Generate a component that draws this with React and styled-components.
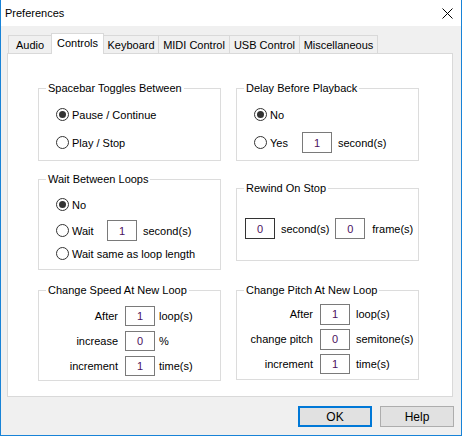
import React from 'react'
import styled, { createGlobalStyle } from 'styled-components'

const Global = createGlobalStyle`
  html, body { margin: 0; padding: 0; background: #fff; }
  * { box-sizing: border-box; }
`

const Window = styled.div`
  width: 462px;
  height: 436px;
  background: #f0f0f0;
  border: 1px solid #1883d7;
  border-top: none;
  font-family: 'Liberation Sans', Arial, sans-serif;
  font-size: 11px;
  color: #000;
  display: flex;
  flex-direction: column;
`

const TitleBar = styled.div`
  height: 26px;
  background: #fff;
  display: flex;
  align-items: center;
  justify-content: space-between;
  padding: 0 8px 0 4px;
  font-size: 11px;
`

const Body = styled.div`
  flex: 1;
  padding: 7px 7px 0 6px;
  display: flex;
  flex-direction: column;
`

const TabStrip = styled.div`
  height: 20px;
  display: flex;
  align-items: flex-end;
  padding-left: 2px;
`

const Tab = styled.div`
  width: ${p => p.$w}px;
  height: ${p => (p.$active ? 21 : 18)}px;
  margin-bottom: ${p => (p.$active ? -1 : 0)}px;
  margin-left: -1px;
  border: 1px solid #d9d9d9;
  border-bottom: none;
  background: ${p => (p.$active ? '#fff' : '#f0f0f0')};
  display: flex;
  align-items: ${p => (p.$active ? 'flex-start' : 'center')};
  padding-top: ${p => (p.$active ? 3 : 1)}px;
  justify-content: center;
  position: relative;
  z-index: ${p => (p.$active ? 1 : 0)};
`

const Panel = styled.div`
  width: 446px;
  height: 344px;
  background: #fff;
  border: 1px solid #d9d9d9;
  padding: 34px 0 0 30px;
  display: flex;
  gap: 15px;
`

const Column = styled.div`
  width: 183px;
  display: flex;
  flex-direction: column;
`

const Group = styled.div`
  position: relative;
  height: ${p => p.$h}px;
  margin-top: ${p => p.$mt || 0}px;
  border: 1px solid #dcdcdc;
  padding: ${p => p.$pad || '0'};
  display: flex;
  flex-direction: column;
`

const Legend = styled.span`
  position: absolute;
  left: 7px;
  top: -7px;
  background: #fff;
  padding: 0 2px;
  line-height: 13px;
`

const Row = styled.div`
  display: flex;
  align-items: center;
  height: 21px;
  margin-top: ${p => p.$mt || 0}px;
`

const RadioLabel = styled.div`
  display: flex;
  align-items: center;
  width: ${p => (p.$w ? `${p.$w}px` : 'auto')};
  gap: 3px;
`

const Circle = styled.span`
  width: 13px;
  height: 13px;
  border-radius: 50%;
  border: 1px solid #333;
  background: #fff;
  display: flex;
  align-items: center;
  justify-content: center;
  &::after {
    content: '';
    display: ${p => (p.$on ? 'block' : 'none')};
    width: 7px;
    height: 7px;
    border-radius: 50%;
    background: #333;
  }
`

const Input = styled.div`
  width: 30px;
  height: ${p => p.$h || 21}px;
  border: 1px solid ${p => (p.$dark ? '#333' : '#7a7a7a')};
  display: flex;
  align-items: center;
  justify-content: center;
  color: #4b0f5e;
  flex-shrink: 0;
`

const Unit = styled.span`
  margin-left: ${p => p.$ml || 6}px;
`

const FormGrid = styled.div`
  display: grid;
  grid-template-columns: ${p => p.$label}px 30px auto;
  grid-auto-rows: 20px;
  row-gap: ${p => p.$gap}px;
  align-items: center;
`

const FieldLabel = styled.span`
  text-align: right;
  padding-right: 7px;
`

const Footer = styled.div`
  display: flex;
  justify-content: flex-end;
  gap: 8px;
  padding: 9px 0 0;
`

const Button = styled.div`
  width: 74px;
  height: 21px;
  background: #e1e1e1;
  border: ${p => (p.$primary ? '2px solid #0078d7' : '1px solid #adadad')};
  display: flex;
  align-items: center;
  justify-content: center;
  font-size: 12px;
`

const Radio = ({ on, children, w }) => (
  <RadioLabel $w={w}>
    <Circle $on={on} />
    <span>{children}</span>
  </RadioLabel>
)

const Close = () => (
  <svg width="11" height="11" viewBox="0 0 11 11">
    <path d="M0.5 0.5 L10.5 10.5 M10.5 0.5 L0.5 10.5" stroke="#000" strokeWidth="1" />
  </svg>
)

const tabs = [
  ['Audio', 44],
  ['Controls', 53],
  ['Keyboard', 56],
  ['MIDI Control', 72],
  ['USB Control', 71],
  ['Miscellaneous', 79],
]

export default function App() {
  return (
    <>
      <Global />
      <Window>
        <TitleBar>
          <span>Preferences</span>
          <Close />
        </TitleBar>
        <Body>
          <TabStrip>
            {tabs.map(([t, w]) => (
              <Tab key={t} $w={w} $active={t === 'Controls'}>
                {t}
              </Tab>
            ))}
          </TabStrip>
          <Panel>
            <Column>
              <Group $h={73} $pad="15px 0 0 17px">
                <Legend>Spacebar Toggles Between</Legend>
                <Row><Radio on>Pause / Continue</Radio></Row>
                <Row $mt={7}><Radio>Play / Stop</Radio></Row>
              </Group>
              <Group $h={91} $mt={18} $pad="14px 0 0 17px">
                <Legend>Wait Between Loops</Legend>
                <Row><Radio on>No</Radio></Row>
                <Row $mt={5}>
                  <Radio w={51}>Wait</Radio>
                  <Input>1</Input>
                  <Unit>second(s)</Unit>
                </Row>
                <Row $mt={2}><Radio>Wait same as loop length</Radio></Row>
              </Group>
              <Group $h={91} $mt={20} $pad="15px 0 0 0">
                <Legend>Change Speed At New Loop</Legend>
                <FormGrid $label={86} $gap={5}>
                  <FieldLabel>After</FieldLabel>
                  <Input $h={20}>1</Input>
                  <Unit $ml={4}>loop(s)</Unit>
                  <FieldLabel>increase</FieldLabel>
                  <Input $h={20}>0</Input>
                  <Unit $ml={4}>%</Unit>
                  <FieldLabel>increment</FieldLabel>
                  <Input $h={20}>1</Input>
                  <Unit $ml={4}>time(s)</Unit>
                </FormGrid>
              </Group>
            </Column>
            <Column>
              <Group $h={73} $pad="15px 0 0 17px">
                <Legend>Delay Before Playback</Legend>
                <Row><Radio on>No</Radio></Row>
                <Row $mt={7}>
                  <Radio w={48}>Yes</Radio>
                  <Input>1</Input>
                  <Unit>second(s)</Unit>
                </Row>
              </Group>
              <Group $h={73} $mt={27} $pad="29px 0 0 8px">
                <Legend>Rewind On Stop</Legend>
                <Row>
                  <Input $dark>0</Input>
                  <Unit>second(s)</Unit>
                  <Unit $ml={6}><Input>0</Input></Unit>
                  <Unit $ml={7}>frame(s)</Unit>
                </Row>
              </Group>
              <Group $h={90} $mt={29} $pad="13px 0 0 0">
                <Legend>Change Pitch At New Loop</Legend>
                <FormGrid $label={83} $gap={5}>
                  <FieldLabel>After</FieldLabel>
                  <Input>1</Input>
                  <Unit>loop(s)</Unit>
                  <FieldLabel>change pitch</FieldLabel>
                  <Input>0</Input>
                  <Unit>semitone(s)</Unit>
                  <FieldLabel>increment</FieldLabel>
                  <Input $h={20}>1</Input>
                  <Unit>time(s)</Unit>
                </FormGrid>
              </Group>
            </Column>
          </Panel>
          <Footer>
            <Button $primary>OK</Button>
            <Button>Help</Button>
          </Footer>
        </Body>
      </Window>
    </>
  )
}
